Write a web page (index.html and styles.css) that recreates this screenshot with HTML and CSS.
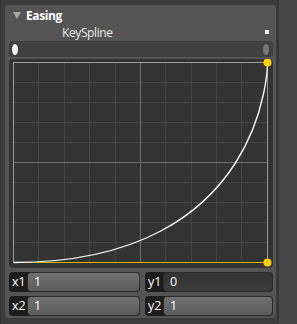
FILE: index.html
```html
<!DOCTYPE html>
<html lang="en">
<head>
    <meta charset="UTF-8">
    <title>Easing</title>
    <link rel="stylesheet" href="styles.css">
</head>
<body>
    <div class="main">
        <div class="panel">
            <div class="header">
                <span class="arrow"></span>
                <span class="title">Easing</span>
            </div>
            <div class="sub">
                <span class="name">KeySpline</span>
                <span class="marker"></span>
            </div>
            <div class="slider">
                <span class="knob"></span>
                <span class="knob end"></span>
            </div>
            <div class="graph">
                <svg width="264" height="209" viewBox="0 0 264 209">
                    <g stroke="#444" stroke-width="1">
                        <line x1="29.5" y1="3" x2="29.5" y2="204" />
                        <line x1="55.5" y1="3" x2="55.5" y2="204" />
                        <line x1="80.5" y1="3" x2="80.5" y2="204" />
                        <line x1="106.5" y1="3" x2="106.5" y2="204" />
                        <line x1="156.5" y1="3" x2="156.5" y2="204" />
                        <line x1="182.5" y1="3" x2="182.5" y2="204" />
                        <line x1="207.5" y1="3" x2="207.5" y2="204" />
                        <line x1="232.5" y1="3" x2="232.5" y2="204" />
                        <line x1="4" y1="23.5" x2="259" y2="23.5" />
                        <line x1="4" y1="43.5" x2="259" y2="43.5" />
                        <line x1="4" y1="63.5" x2="259" y2="63.5" />
                        <line x1="4" y1="83.5" x2="259" y2="83.5" />
                        <line x1="4" y1="123.5" x2="259" y2="123.5" />
                        <line x1="4" y1="143.5" x2="259" y2="143.5" />
                        <line x1="4" y1="163.5" x2="259" y2="163.5" />
                        <line x1="4" y1="183.5" x2="259" y2="183.5" />
                    </g>
                    <g stroke="#6c6c6c" stroke-width="1">
                        <line x1="131.5" y1="3" x2="131.5" y2="204" />
                        <line x1="4" y1="103.5" x2="259" y2="103.5" />
                    </g>
                    <rect x="4.5" y="3.5" width="254" height="200" fill="none" stroke="#9c9c9c" stroke-width="1" />
                    <line x1="4" y1="203.5" x2="258.5" y2="203.5" stroke="#e8b800" stroke-width="1.2" />
                    <path d="M4.5 203.5 C258.5 203.5 258.5 3.5 258.5 3.5" fill="none" stroke="#f2f2f2" stroke-width="1.4" />
                    <circle cx="258.5" cy="203.5" r="4" fill="#ffd000" />
                    <circle cx="258.5" cy="3.5" r="4" fill="#ffd000" />
                </svg>
            </div>
            <div class="fields">
                <div class="field">
                    <span class="label">x1</span>
                    <span class="value">1</span>
                </div>
                <div class="field narrow">
                    <span class="label">y1</span>
                    <span class="value dark">0</span>
                </div>
                <div class="field">
                    <span class="label">x2</span>
                    <span class="value">1</span>
                </div>
                <div class="field narrow">
                    <span class="label">y2</span>
                    <span class="value">1</span>
                </div>
            </div>
        </div>
    </div>
    <div class="side"></div>
</body>
</html>
```

FILE: styles.css
```css
body {
    margin: 0;
    width: 297px;
    height: 324px;
    display: flex;
    background: #3c3c3c;
    font-family: 'Open Sans', sans-serif;
    font-size: 12px;
    color: #f0f0f0;
    overflow: hidden;
}
.main {
    width: 277px;
    padding: 4px 0 0 3px;
    border-left: 1px solid #333;
    box-sizing: border-box;
}
.panel {
    width: 273px;
    height: 315px;
    box-sizing: border-box;
    background: #545454;
    border: 1px solid #3a3a3a;
    border-radius: 4px;
    padding: 0 3px 0 4px;
}
.side {
    flex: 1;
    background: #474747;
    border-left: 2px solid #363636;
}
.header {
    display: flex;
    align-items: center;
    height: 18px;
    padding-top: 1px;
}
.arrow {
    width: 0;
    height: 0;
    margin: 1px 5px 0 4px;
    border-left: 4px solid transparent;
    border-right: 4px solid transparent;
    border-top: 7px solid #a8a8a8;
}
.title {
    font-weight: bold;
    color: #fff;
    letter-spacing: -0.4px;
}
.sub {
    display: flex;
    align-items: center;
    justify-content: space-between;
    height: 16px;
    padding: 0 4px 0 53px;
}
.name {
    color: #eaeaea;
    letter-spacing: -0.4px;
}
.marker {
    width: 4px;
    height: 4px;
    background: #f4f4f4;
}
.slider {
    display: flex;
    justify-content: space-between;
    align-items: center;
    height: 16px;
    margin-top: 1px;
    padding: 0 4px 0 3px;
    background: #404040;
    border-radius: 3px;
}
.knob {
    width: 6px;
    height: 11px;
    border-radius: 50%;
    background: #f2f2f2;
}
.knob.end {
    background: #777;
}
.graph {
    height: 209px;
    margin-top: 2px;
    background: #333;
    border-radius: 4px;
}
.graph svg {
    display: block;
}
.fields {
    display: grid;
    grid-template-columns: 131px 128px;
    gap: 4px 5px;
    margin-top: 4px;
}
.field {
    display: flex;
    height: 20px;
    background: #1c1c1c;
    border-radius: 4px;
}
.label {
    width: 18px;
    line-height: 20px;
    padding-left: 3px;
    color: #fff;
    font-size: 12.5px;
}
.value {
    flex: 1;
    margin-left: -3px;
    padding-left: 6px;
    line-height: 18px;
    color: #fff;
    font-size: 12.5px;
    background: linear-gradient(#707070, #5c5c5c);
    border: 1px solid #2c2c2c;
    border-radius: 4px;
}
.value.dark {
    background: linear-gradient(#333, #3c3c3c);
}
```
